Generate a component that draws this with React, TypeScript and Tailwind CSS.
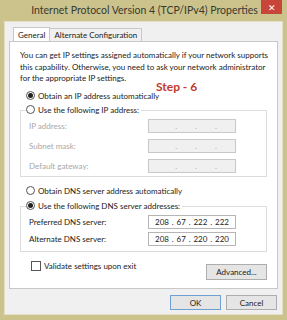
import React from 'react';

const font = { fontFamily: 'Lato, "Open Sans", sans-serif' };

const Radio: React.FC<{ checked?: boolean; label: string; bg?: boolean }> = ({ checked, label, bg }) => (
  <div className={`flex items-center h-[12px] ${bg ? 'bg-white pr-[2px]' : ''}`}>
    <span className="w-[9px] h-[9px] rounded-full border border-[#555] bg-white flex items-center justify-center">
      {checked && <span className="w-[5px] h-[5px] rounded-full bg-[#222]" />}
    </span>
    <span className="ml-[3px] text-[8px] text-[#222] leading-none">{label}</span>
  </div>
);

const IpBox: React.FC<{ value?: string[]; disabled?: boolean }> = ({ value, disabled }) => (
  <div
    className={`w-[88px] h-[14px] border flex items-center text-[8px] leading-none ${
      disabled ? 'border-[#c8c8c8] bg-[#f0f0f0] text-[#aaa]' : 'border-[#b5b5b5] bg-white text-[#222]'
    }`}
  >
    {value ? (
      <div className="flex w-full justify-between px-[6px]">
        <span>{value[0]}</span>
        <span>.</span>
        <span>{value[1]}</span>
        <span>.</span>
        <span>{value[2]}</span>
        <span>.</span>
        <span>{value[3]}</span>
      </div>
    ) : (
      <div className="flex w-full justify-center gap-[18px] pl-[8px]">
        <span>.</span>
        <span>.</span>
        <span>.</span>
      </div>
    )}
  </div>
);

const Row: React.FC<{ label: string; disabled?: boolean; value?: string[] }> = ({ label, disabled, value }) => (
  <div className="flex items-center justify-between pl-[8px] pr-[30px]">
    <span className={`text-[8px] leading-none ${disabled ? 'text-[#a8a8a8]' : 'text-[#222]'}`}>{label}</span>
    <IpBox disabled={disabled} value={value} />
  </div>
);

export default function App() {
  return (
    <div className="w-[287px] h-[320px] bg-[#cbc28c] flex flex-col px-[4px] pb-[5px] overflow-hidden" style={font}>
      <div className="relative h-[21px] flex items-center justify-center">
        <span className="text-[10.5px] text-[#3a3a30] ml-[2px]">Internet Protocol Version 4 (TCP/IPv4) Properties</span>
        <div className="absolute right-[1px] top-0 w-[21px] h-[14px] bg-[#c8453a] flex items-center justify-center text-white text-[9px] leading-none">
          ✕
        </div>
      </div>
      <div className="flex-1 bg-[#f0f0f0] border border-[#e4e0c8] px-[4px] pt-[4px] flex flex-col">
        <div className="flex items-end h-[15px] pl-[4px]">
          <div className="h-[15px] px-[4px] bg-white border border-b-0 border-[#c8c8c8] text-[8px] text-[#222] flex items-center relative top-[1px]">
            General
          </div>
          <div className="h-[13px] px-[4px] bg-[#f0f0f0] border border-l-0 border-b-0 border-[#c8c8c8] text-[8px] text-[#222] flex items-center">
            Alternate Configuration
          </div>
        </div>
        <div className="relative h-[248px] bg-white border border-[#c8c8c8] px-[10px] pt-[8px] flex flex-col">
          <p className="text-[8px] leading-[11.5px] text-[#222] whitespace-nowrap">
            You can get IP settings assigned automatically if your network supports
            <br />
            this capability. Otherwise, you need to ask your network administrator
            <br />
            for the appropriate IP settings.
          </p>
          <span className="absolute left-[146px] top-[39px] text-[12px] font-bold text-[#c0392b] leading-none">Step - 6</span>
          <div className="mt-[5px] pl-[6px]">
            <Radio checked label="Obtain an IP address automatically" />
          </div>
          <div className="mt-[2px] flex flex-col">
            <div className="pl-[6px] flex relative z-10">
              <Radio label="Use the following IP address:" bg />
            </div>
            <div className="-mt-[6px] h-[67px] border border-[#dcdcdc] pt-[8px] flex flex-col gap-[6px]">
              <Row label="IP address:" disabled />
              <Row label="Subnet mask:" disabled />
              <Row label="Default gateway:" disabled />
            </div>
          </div>
          <div className="mt-[8px] pl-[6px]">
            <Radio label="Obtain DNS server address automatically" />
          </div>
          <div className="mt-[3px] flex flex-col">
            <div className="pl-[6px] flex relative z-10">
              <Radio checked label="Use the following DNS server addresses:" bg />
            </div>
            <div className="-mt-[6px] h-[46px] border border-[#dcdcdc] pt-[8px] flex flex-col gap-[3px]">
              <Row label="Preferred DNS server:" value={['208', '67', '222', '222']} />
              <Row label="Alternate DNS server:" value={['208', '67', '220', '220']} />
            </div>
          </div>
          <div className="mt-[9px] flex items-start justify-between pl-[11px]">
            <div className="flex items-center">
              <span className="w-[10px] h-[10px] border border-[#555] bg-white" />
              <span className="ml-[3px] text-[8px] text-[#222] leading-none">Validate settings upon exit</span>
            </div>
            <div className="mt-[3px] w-[61px] h-[16px] border border-[#adadad] bg-[#e5e5e5] text-[8px] text-[#222] flex items-center justify-center">
              Advanced...
            </div>
          </div>
        </div>
        <div className="flex justify-end gap-[5px] mt-[6px] pr-[1px]">
          <div className="w-[51px] h-[15px] border border-[#6fa0d0] bg-[#e5e5e5] text-[8px] text-[#222] flex items-center justify-center">
            OK
          </div>
          <div className="w-[51px] h-[15px] border border-[#adadad] bg-[#e5e5e5] text-[8px] text-[#222] flex items-center justify-center">
            Cancel
          </div>
        </div>
      </div>
    </div>
  );
}
